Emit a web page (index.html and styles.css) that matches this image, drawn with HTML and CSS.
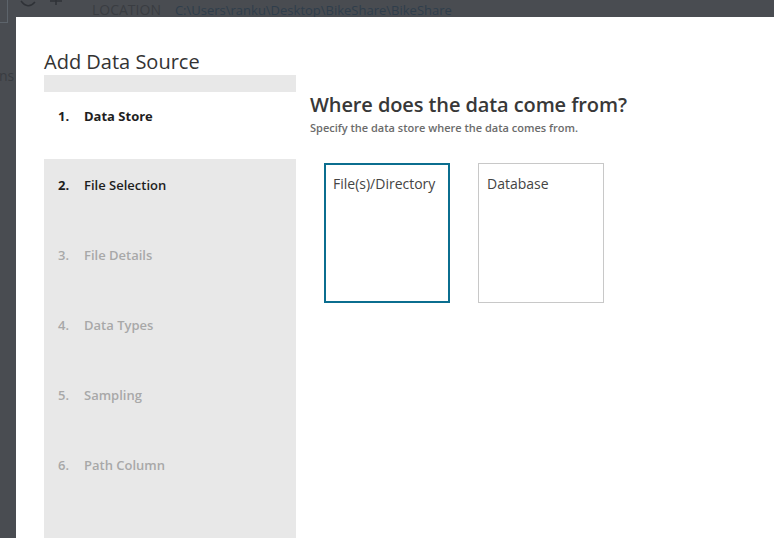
FILE: index.html
```html
<!DOCTYPE html>
<html>
<head>
<meta charset="utf-8">
<link rel="stylesheet" href="styles.css">
</head>
<body>
<div class="app">
  <div class="toolbar">
    <div class="tb-box"></div>
    <svg class="tb-icon" width="16" height="10" viewBox="0 0 16 10"><path d="M1 1 Q8 10 15 2" fill="none" stroke="#2f3237" stroke-width="1.5"/></svg>
    <svg class="tb-icon plus" width="12" height="10" viewBox="0 0 12 10"><path d="M6 0 V8 M0 4 H12" fill="none" stroke="#2f3237" stroke-width="1.5"/></svg>
    <span class="tb-label">LOCATION</span>
    <span class="tb-path">C:\Users\ranku\Desktop\BikeShare\BikeShare</span>
  </div>
  <div class="side-text">
    <span class="frag2">ns</span>
  </div>
</div>

<div class="modal">
  <h1 class="title">Add Data Source</h1>
  <div class="wizard">
    <nav class="steps">
      <div class="steps-head"></div>
      <div class="step active"><span class="num">1.</span><span class="label">Data Store</span></div>
      <div class="step done"><span class="num">2.</span><span class="label">File Selection</span></div>
      <div class="step"><span class="num">3.</span><span class="label">File Details</span></div>
      <div class="step"><span class="num">4.</span><span class="label">Data Types</span></div>
      <div class="step"><span class="num">5.</span><span class="label">Sampling</span></div>
      <div class="step"><span class="num">6.</span><span class="label">Path Column</span></div>
    </nav>
    <section class="content">
      <h2 class="heading">Where does the data come from?</h2>
      <p class="sub">Specify the data store where the data comes from.</p>
      <div class="cards">
        <div class="card selected">File(s)/Directory</div>
        <div class="card">Database</div>
      </div>
    </section>
  </div>
</div>
</body>
</html>
```

FILE: styles.css
```css
html, body {
  margin: 0;
  padding: 0;
  height: 100%;
  overflow: hidden;
}
body {
  background: #494c51;
  font-family: "Open Sans", "Noto Sans", sans-serif;
  position: relative;
}
.app {
  height: 100%;
}
.toolbar {
  height: 17px;
  display: flex;
  align-items: flex-start;
  position: relative;
}
.tb-box {
  width: 7px;
  height: 22px;
  border: 1px solid #5d646b;
  border-left: none;
  border-top: none;
  flex: none;
}
.tb-icon {
  flex: none;
  margin-left: 12px;
  margin-top: 0;
}
.tb-icon.plus {
  margin-left: 14px;
  margin-top: -3px;
}
.tb-label {
  margin-left: 30px;
  font-size: 14px;
  line-height: 20px;
  color: #3a3d42;
}
.tb-path {
  margin-left: 14px;
  font-size: 13px;
  line-height: 20px;
  color: #2f3e4c;
}
.side-text {
  display: flex;
  flex-direction: column;
  font-size: 14px;
  color: #393c41;
  padding-top: 50px;
}
.frag2 {
  margin-left: -1px;
  line-height: 18px;
}

.modal {
  position: absolute;
  left: 16px;
  top: 17px;
  right: 0;
  bottom: 0;
  background: #ffffff;
  padding-left: 28px;
  display: flex;
  flex-direction: column;
}
.title {
  margin: 0;
  padding-top: 31px;
  font-size: 20px;
  font-weight: 400;
  line-height: 27px;
  color: #333333;
  height: 27px;
}
.wizard {
  display: flex;
  flex: 1;
  min-height: 0;
}
.steps {
  width: 252px;
  background: #e8e8e8;
  display: flex;
  flex-direction: column;
  flex: none;
}
.steps-head {
  height: 17px;
}
.step {
  height: 70px;
  box-sizing: border-box;
  padding: 16px 0 0 14px;
  font-size: 13px;
  font-weight: 600;
  line-height: 20px;
  color: #a8a8a8;
  display: flex;
}
.step .num {
  width: 26px;
}
.step.active {
  height: 67px;
  padding-top: 14px;
  background: #ffffff;
  color: #1e1e1e;
  font-weight: 700;
}
.step.done {
  color: #1e1e1e;
}
.step.done .num {
  font-weight: 700;
}
.content {
  padding: 16px 0 0 14px;
}
.heading {
  margin: 0;
  font-size: 20px;
  font-weight: 600;
  letter-spacing: -0.1px;
  line-height: 28px;
  color: #383838;
}
.sub {
  margin: 2px 0 0 0;
  font-size: 11px;
  font-weight: 600;
  line-height: 14px;
  color: #6b6b6b;
}
.cards {
  display: flex;
  gap: 28px;
  margin: 28px 0 0 14px;
}
.card {
  width: 126px;
  height: 140px;
  box-sizing: border-box;
  border: 1px solid #c8c8c8;
  padding: 10px 0 0 8px;
  font-size: 14px;
  line-height: 20px;
  color: #444444;
}
.card.selected {
  border: 2px solid #0b6e8f;
  padding: 9px 0 0 7px;
}
```
